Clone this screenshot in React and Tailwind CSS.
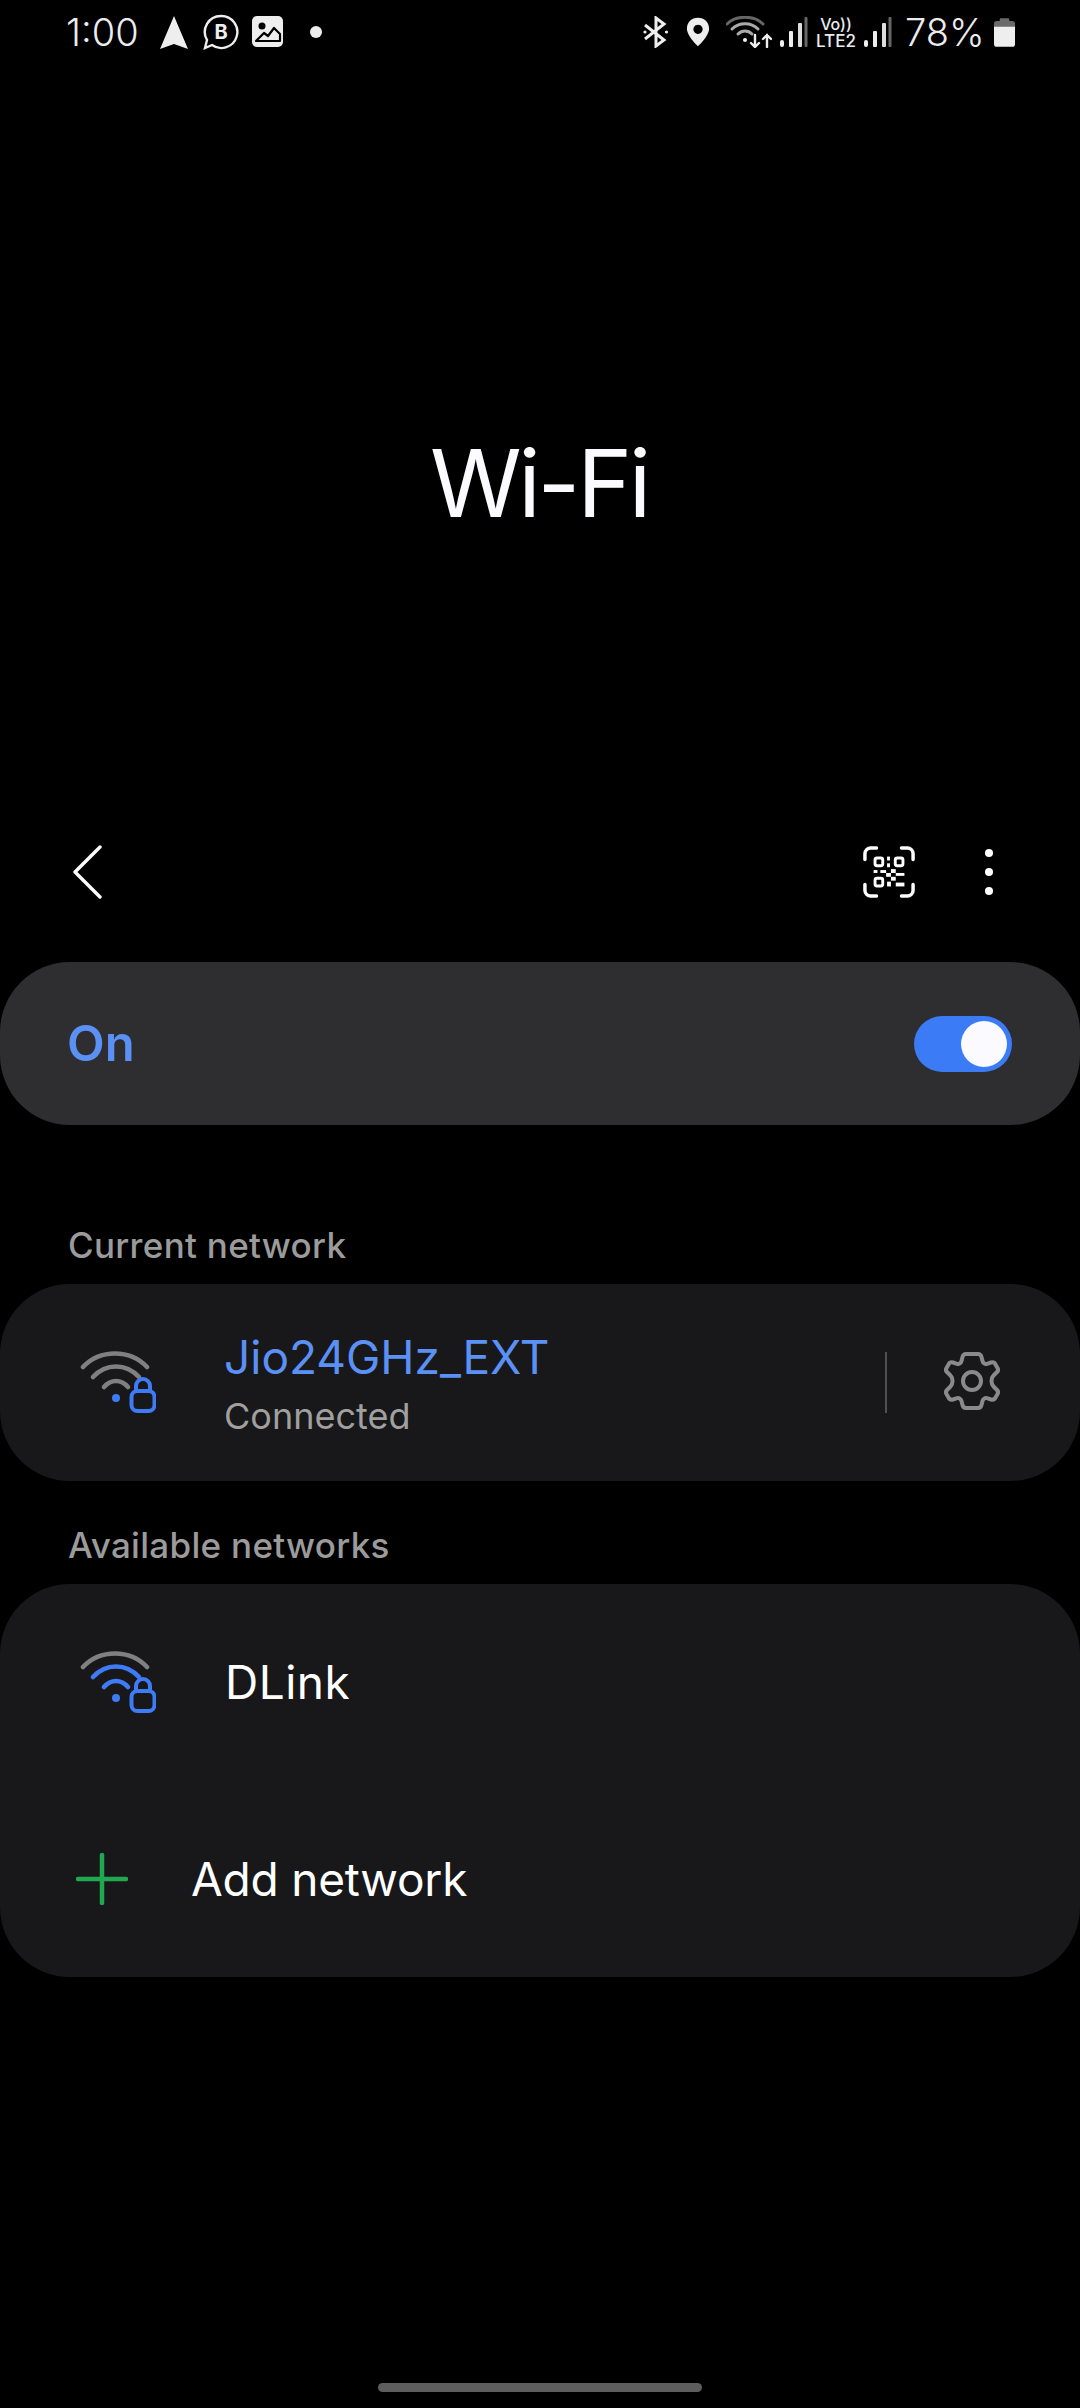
import React from "react";

const font = { fontFamily: "Inter, Roboto, 'Noto Sans', sans-serif" };

function WifiLock({ blue }) {
  const arcTop = "#808080";
  return (
    <svg width="76" height="66" viewBox="0 0 76 66" fill="none" strokeLinecap="round">
      <path d="M3 17 C 20 -1, 50 -1, 67 17" stroke={arcTop} strokeWidth="4.6" />
      <path d="M13 27 C 26 13, 46 13, 59 27" stroke={blue ? "#3e7bf6" : arcTop} strokeWidth="4.6" />
      <path d="M24 37 C 31 29, 41 29, 48 37" stroke={blue ? "#3e7bf6" : arcTop} strokeWidth="4.6" />
      <circle cx="36" cy="48" r="4" fill="#3e7bf6" />
      <rect x="51.5" y="41" width="23" height="20" rx="6" stroke="#3e7bf6" strokeWidth="4" />
      <path d="M56 41 v-5 a7 7 0 0 1 14 0 v5" stroke="#3e7bf6" strokeWidth="4" />
    </svg>
  );
}

function Gear() {
  return (
    <svg width="56" height="58" viewBox="0 0 56 58" fill="none" stroke="#8a8a8a" strokeWidth="4" strokeLinejoin="round">
      <path d="M22 2 H34 C36 2 37 3 37.5 5 L38.5 9 C39 11 41 12.5 43 11.8 L47 10.5 C49 10 50.5 10.5 51.5 12.5 L53.5 16 C54.5 18 54 19.5 52.5 20.5 L49.5 23.5 C48 25 47.5 27 47.5 29 C47.5 31 48 33 49.5 34.5 L52.5 37.5 C54 38.5 54.5 40 53.5 42 L51.5 45.5 C50.5 47.5 49 48 47 47.5 L43 46.2 C41 45.5 39 47 38.5 49 L37.5 53 C37 55 36 56 34 56 H22 C20 56 19 55 18.5 53 L17.5 49 C17 47 15 45.5 13 46.2 L9 47.5 C7 48 5.5 47.5 4.5 45.5 L2.5 42 C1.5 40 2 38.5 3.5 37.5 L6.5 34.5 C8 33 8.5 31 8.5 29 C8.5 27 8 25 6.5 23.5 L3.5 20.5 C2 19.5 1.5 18 2.5 16 L4.5 12.5 C5.5 10.5 7 10 9 10.5 L13 11.8 C15 12.5 17 11 17.5 9 L18.5 5 C19 3 20 2 22 2 Z" />
      <circle cx="28" cy="29" r="9" />
    </svg>
  );
}

function QrIcon() {
  return (
    <svg width="52" height="52" viewBox="0 0 54 54" fill="none">
      <g stroke="#fff" strokeWidth="3.6" strokeLinecap="round">
        <path d="M2 14 V8 a6 6 0 0 1 6 -6 H14" />
        <path d="M40 2 H46 a6 6 0 0 1 6 6 V14" />
        <path d="M2 40 V46 a6 6 0 0 0 6 6 H14" />
        <path d="M40 52 H46 a6 6 0 0 0 6 -6 V40" />
      </g>
      <g stroke="#fff" strokeWidth="3">
        <rect x="12.5" y="12.5" width="8" height="8" rx="2" />
        <rect x="33.5" y="12.5" width="8" height="8" rx="2" />
        <rect x="12.5" y="33.5" width="8" height="8" rx="2" />
      </g>
      <g fill="#fff">
        <rect x="25" y="11" width="3" height="4" />
        <rect x="25" y="18" width="3" height="4" />
        <rect x="11" y="25" width="4" height="3" />
        <rect x="18" y="25" width="6" height="3" />
        <rect x="24" y="28" width="5" height="4" />
        <rect x="29" y="24" width="5" height="4" />
        <rect x="34" y="28" width="9" height="3" />
        <rect x="29" y="32" width="5" height="4" />
        <rect x="25" y="37" width="4" height="5" />
        <rect x="34" y="38" width="9" height="4" />
      </g>
    </svg>
  );
}

function Signal() {
  return (
    <svg width="28" height="31" viewBox="0 0 28 31" className="block">
      <rect x="0" y="23" width="4" height="7" rx="2" fill="#eee" />
      <rect x="9" y="14" width="4" height="16" rx="1" fill="#eee" />
      <rect x="18" y="6" width="4" height="24" rx="1" fill="#ddd" />
      <rect x="24.5" y="0" width="3" height="30" rx="1" fill="#666" />
    </svg>
  );
}

function StatusBar() {
  return (
    <div className="h-[64px] flex items-center justify-between pl-[66px] pr-[65px] text-[#ececec]">
      <div className="flex items-center">
        <span className="text-[38px] font-light leading-none w-[76px] whitespace-nowrap">1:00</span>
        <svg width="28" height="35" viewBox="0 0 28 35" className="ml-[18px]"><path d="M14 1 L28 34 L14 29 L0 34 Z" fill="#eee" /></svg>
        <svg width="36" height="36" viewBox="0 0 36 36" fill="none" className="ml-[15px]">
          <path d="M18 2 a16 16 0 1 1 -9 29 L2 34 L4 26 A16 16 0 0 1 18 2 Z" stroke="#eee" strokeWidth="2.4" />
          <text x="18" y="25" textAnchor="middle" fontSize="20" fontWeight="700" fill="#eee" fontFamily="Inter">B</text>
        </svg>
        <svg width="32" height="32" viewBox="0 0 32 32" className="ml-[13px]">
          <rect width="31" height="31" rx="5" fill="#eee" />
          <circle cx="10" cy="10" r="3.5" fill="#000" />
          <path d="M4 25 L12 17 L16 20 L22 12 L28 18 V25 Z" fill="none" stroke="#000" strokeWidth="2.2" strokeLinejoin="round" />
        </svg>
        <span className="w-[12px] h-[12px] rounded-full bg-[#eee] ml-[26px]" />
      </div>
      <div className="flex items-center">
        <svg width="26" height="32" viewBox="0 0 26 32" fill="none" stroke="#eee" strokeWidth="3">
          <path d="M2 9 L21 24 L13 30 V2 L21 8 L2 23" />
          <circle cx="2" cy="16" r="1.6" fill="#eee" stroke="none" />
          <circle cx="23.5" cy="16" r="1.6" fill="#eee" stroke="none" />
        </svg>
        <svg width="24" height="31" viewBox="0 0 26 32" className="ml-[17px]">
          <path fillRule="evenodd" d="M13 0 C20 0 25 5 25 12 C25 20 13 31 13 31 C13 31 1 20 1 12 C1 5 6 0 13 0 Z M13 7.5 a5 5 0 1 0 0.01 0 Z" fill="#eee" />
        </svg>
        <svg width="46" height="32" viewBox="0 0 46 32" fill="none" strokeLinecap="round" className="ml-[16px]">
          <path d="M1 8 C10 -1, 28 -1, 37 8" stroke="#666" strokeWidth="3" />
          <path d="M6 13 C13 6, 25 6, 32 13" stroke="#aaa" strokeWidth="3" />
          <path d="M12 18 C16 14, 22 14, 26 18" stroke="#aaa" strokeWidth="3" />
          <circle cx="19" cy="24" r="2" fill="#eee" />
          <path d="M29 19 V31 M25 27 L29 31 L33 27" stroke="#eee" strokeWidth="2.4" />
          <path d="M41 31 V19 M37 23 L41 19 L45 23" stroke="#eee" strokeWidth="2.4" />
        </svg>
        <div className="ml-[8px]"><Signal /></div>
        <div className="ml-[8px] w-[40px] flex flex-col items-center font-medium leading-none">
          <span className="text-[16px] h-[17px] leading-[17px] whitespace-nowrap">Vo))</span>
          <span className="text-[17px] h-[16px] leading-[16px] whitespace-nowrap">LTE2</span>
        </div>
        <div className="ml-[8px]"><Signal /></div>
        <span className="text-[38px] font-light leading-none ml-[13px] w-[80px] whitespace-nowrap">78%</span>
        <svg width="21" height="31" viewBox="0 0 22 32" className="ml-[9px]">
          <path d="M7 1 h8 a1 1 0 0 1 1 1 v2 h3 a3 3 0 0 1 3 3 v4 H0 V7 a3 3 0 0 1 3 -3 h3 V2 a1 1 0 0 1 1 -1 Z" fill="#6a6a6a" />
          <path d="M0 10 H22 V28 a3 3 0 0 1 -3 3 H3 a3 3 0 0 1 -3 -3 Z" fill="#eee" />
        </svg>
      </div>
    </div>
  );
}

export default function App() {
  return (
    <div className="w-[1080px] h-[2408px] bg-black text-white flex flex-col overflow-hidden" style={font}>
      <StatusBar />
      <div className="h-[750px] flex items-center justify-center pt-[88px]">
        <h1 className="text-[93px] font-normal tracking-[-0.035em] leading-none text-[#fbfbff] -ml-[2px]">Wi-Fi</h1>
      </div>
      <div className="h-[116px] flex items-center justify-between pl-[72px] pr-[87px]">
        <svg width="32" height="54" viewBox="0 0 32 54" fill="none" stroke="#fff" strokeWidth="3.4" strokeLinecap="round" strokeLinejoin="round">
          <path d="M28 2 L3 27 L28 52" />
        </svg>
        <div className="flex items-center">
          <QrIcon />
          <div className="flex flex-col gap-[11px] ml-[70px]">
            <span className="w-[8px] h-[8px] rounded-full bg-white" />
            <span className="w-[8px] h-[8px] rounded-full bg-white" />
            <span className="w-[8px] h-[8px] rounded-full bg-white" />
          </div>
        </div>
      </div>
      <section className="mt-[32px] h-[163px] rounded-[70px] bg-[#2e2e30] flex items-center justify-between pl-[67px] pr-[68px]">
        <span className="text-[49px] font-semibold text-[#5b90f5]">On</span>
        <span className="w-[98px] h-[56px] rounded-full bg-[#3b7bf6] flex items-center justify-end pr-[5px]">
          <span className="w-[46px] h-[46px] rounded-full bg-[#fbfbff]" />
        </span>
      </section>
      <h2 className="mt-[100px] pl-[68px] text-[35px] tracking-[0.3px] leading-[40px] font-medium text-[#9b9b9b]">Current network</h2>
      <section className="mt-[19px] h-[197px] rounded-[70px] bg-[#18181a] flex items-center pl-[80px] pr-[80px]">
        <WifiLock />
        <div className="ml-[68px] flex-1 flex flex-col pt-[6px]">
          <span className="text-[46px] leading-[54px] -mt-[4px] text-[#5b90f5]">Jio24GHz_EXT</span>
          <span className="text-[36px] leading-[44px] mt-[10px] text-[#a0a0a0]">Connected</span>
        </div>
        <span className="w-[2px] h-[61px] bg-[#505050]" />
        <div className="ml-[57px] mb-[4px]"><Gear /></div>
      </section>
      <h2 className="mt-[44px] pl-[68px] text-[35px] tracking-[0.3px] leading-[40px] font-medium text-[#9b9b9b]">Available networks</h2>
      <section className="mt-[19px] h-[393px] rounded-[70px] bg-[#18181a] flex flex-col">
        <div className="h-[197px] flex items-center pl-[80px]">
          <WifiLock blue />
          <span className="ml-[69px] text-[46px] tracking-[0.5px] text-white">DLink</span>
        </div>
        <div className="h-[196px] flex items-center pl-[76px]">
          <svg width="52" height="52" viewBox="0 0 52 52" stroke="#1fa850" strokeWidth="4.5" strokeLinecap="round">
            <path d="M26 2 V50 M2 26 H50" />
          </svg>
          <span className="ml-[63px] text-[46px] tracking-[-0.2px] text-white">Add network</span>
        </div>
      </section>
      <div className="flex-1 flex items-end justify-center pb-[16px]">
        <span className="w-[324px] h-[9px] rounded-full bg-[#5d5d5d]" />
      </div>
    </div>
  );
}
